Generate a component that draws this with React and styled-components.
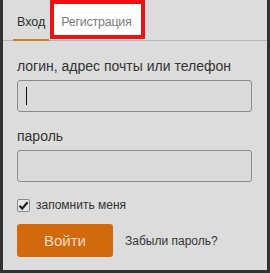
import React, { useState } from "react";
import styled, { createGlobalStyle } from "styled-components";

const GlobalStyle = createGlobalStyle`
  html, body {
    margin: 0;
    padding: 0;
    background: #323232;
  }
  body {
    font-family: "Liberation Sans", Arial, sans-serif;
  }
`;

const LoginForm = () => {
  const [remember, setRemember] = useState(true);

  return (
    <Frame>
      <GlobalStyle />
      <Panel>
        <Tabs>
          <Tab active>Вход</Tab>
          <Tab highlighted>Регистрация</Tab>
        </Tabs>

        <Body>
          <Field>
            <Label>логин, адрес почты или телефон</Label>
            <Input>
              <Caret />
            </Input>
          </Field>

          <Field>
            <Label>пароль</Label>
            <Input />
          </Field>

          <Remember onClick={() => setRemember(!remember)}>
            <Check checked={remember}>
              {remember && (
                <svg width="11" height="11" viewBox="0 0 11 11">
                  <path
                    d="M1.5 5.8 L4.2 8.6 L9.6 2.2"
                    fill="none"
                    stroke="#1e1e1e"
                    strokeWidth="2.2"
                  />
                </svg>
              )}
            </Check>
            запомнить меня
          </Remember>

          <Actions>
            <LoginButton>Войти</LoginButton>
            <Forgot>Забыли пароль?</Forgot>
          </Actions>
        </Body>
      </Panel>
    </Frame>
  );
};

//Styled Components
const Frame = styled.div`
  width: 270px;
  height: 273px;
  padding: 0 3px 3px 3px;
  box-sizing: border-box;
`;

const Panel = styled.div`
  width: 264px;
  height: 270px;
  background: #dcdcdc;
`;

const Tabs = styled.div`
  display: flex;
  align-items: flex-start;
  height: 40px;
  padding-left: 10px;
  border-bottom: 1px solid #b4b4b4;
`;

const Tab = styled.div`
  display: flex;
  align-items: center;
  box-sizing: border-box;
  height: 41px;
  padding: 3px 4px 0 4px;
  font-size: 12.5px;
  color: ${(p) => (p.active ? "#2e2e2e" : "#7a7a7a")};
  background: ${(p) => (p.highlighted ? "#ffffff" : "transparent")};
  box-shadow: ${(p) => (p.active ? "inset 0 -2px 0 #cf7a24" : "none")};
  ${(p) =>
    p.highlighted &&
    `
    width: 95px;
    height: 39px;
    margin-left: 1px;
    padding: 5px 0 0 11px;
    letter-spacing: -0.25px;
    outline: 4px solid #ee1111;
    outline-offset: -4px;
  `}
`;

const Body = styled.div`
  padding: 17px 14px 0 14px;
`;

const Field = styled.div`
  display: flex;
  flex-direction: column;
  margin-bottom: 16px;
`;

const Label = styled.div`
  font-size: 14px;
  color: #333;
  line-height: 16px;
  margin-bottom: 6px;
`;

const Input = styled.div`
  position: relative;
  width: 235px;
  height: 32px;
  box-sizing: border-box;
  border: 1px solid #8c8c8c;
  border-radius: 3px;
  background: #dadada;
`;

const Caret = styled.div`
  position: absolute;
  left: 8px;
  top: 6px;
  width: 1px;
  height: 18px;
  background: #111;
`;

const Remember = styled.label`
  display: flex;
  align-items: center;
  gap: 6px;
  font-size: 12px;
  color: #333;
  cursor: pointer;
`;

const Check = styled.span`
  display: inline-flex;
  align-items: center;
  justify-content: center;
  width: 13px;
  height: 13px;
  box-sizing: border-box;
  border: 1px solid #8a8a8a;
  border-radius: 2px;
  background: #e6e6e6;
`;

const Actions = styled.div`
  display: flex;
  align-items: center;
  gap: 12px;
  margin-top: 12px;
`;

const LoginButton = styled.button`
  width: 96px;
  height: 33px;
  border: none;
  border-radius: 3px;
  background: #d2690d;
  color: #f4dcc6;
  font-family: "Liberation Sans", Arial, sans-serif;
  font-size: 15px;
  cursor: pointer;
`;

const Forgot = styled.span`
  font-size: 12px;
  color: #333;
`;

export default LoginForm;
